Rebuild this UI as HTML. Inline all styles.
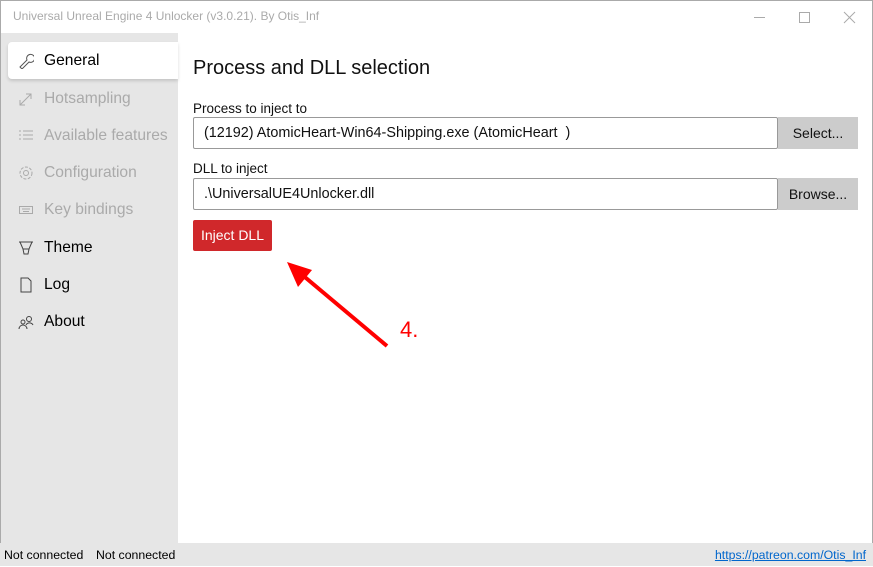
<!DOCTYPE html>
<html><head><meta charset="utf-8"><style>
*{box-sizing:border-box;margin:0;padding:0}
body{width:873px;height:566px;overflow:hidden;font-family:"Segoe UI","Liberation Sans",sans-serif;background:#fff;position:relative}
.frame{position:absolute;left:0;top:0;width:873px;height:566px;border:1px solid #aaa;border-bottom:none}
.title{position:absolute;left:13px;top:9px;font-size:12px;color:#aaa}
.side{position:absolute;left:1px;top:33px;width:177px;height:510px;background:#e6e6e6}
.nav{position:absolute;left:8px;height:37px;width:170px;font-size:15.6px;line-height:37px;padding-left:36px;color:#000}
.nav.dis{color:#aaa}
.nav.sel{background:#fff;border-radius:4px 0 0 4px;box-shadow:0 2px 3px rgba(0,0,0,.15)}
.nav svg{position:absolute;left:10px;top:11px}
h1{position:absolute;left:193px;top:57px;font-size:20px;font-weight:normal;color:#111}
.lbl{position:absolute;left:193px;font-size:13.5px;color:#111}
.inp{position:absolute;left:193px;width:585px;height:32px;border:1px solid #999;border-radius:2px;font-size:14.4px;line-height:30px;padding-left:10px;color:#111}
.btn{position:absolute;left:778px;width:80px;height:32px;background:#ccc;font-size:14px;line-height:32px;text-align:center;color:#111}
.inj{position:absolute;left:193px;top:220px;width:79px;height:31px;background:#d0282b;color:#fff;font-size:14px;line-height:31px;text-align:center;border-radius:2px}
.status{position:absolute;left:0;top:543px;width:873px;height:23px;background:#e6e6e6;font-size:12.3px;line-height:24px}
</style></head><body>
<div class="frame"></div>
<div class="title">Universal Unreal Engine 4 Unlocker (v3.0.21). By Otis_Inf</div>
<svg style="position:absolute;left:754px;top:10px" width="110" height="16"><line x1="0" y1="7.5" x2="11" y2="7.5" stroke="#aaa"/><rect x="45.5" y="2.5" width="10" height="10" fill="none" stroke="#aaa"/><path d="M90 2l11 11M101 2l-11 11" stroke="#aaa"/></svg>
<div class="side"></div>
<div class="nav sel" style="top:42px"><svg width="16" height="16"><path d="M2 14l7-7a4 4 0 1 1 2 2l-7 7z" fill="none" stroke="#555"/></svg>General</div>
<div class="nav dis" style="top:80px"><svg width="16" height="16"><path d="M2 14L13 3M2 9v5h5M13 8V3H8" fill="none" stroke="#aaa"/></svg>Hotsampling</div>
<div class="nav dis" style="top:117px"><svg width="16" height="16"><path d="M1 3h2M5 3h10M1 7h2M5 7h10M1 11h2M5 11h10" stroke="#aaa"/></svg>Available features</div>
<div class="nav dis" style="top:154px"><svg width="16" height="16"><circle cx="8" cy="8" r="6" fill="none" stroke="#aaa" stroke-dasharray="3 1.5"/><circle cx="8" cy="8" r="2.5" fill="none" stroke="#aaa"/></svg>Configuration</div>
<div class="nav dis" style="top:191px"><svg width="16" height="16"><rect x="1.5" y="4.5" width="13" height="7" fill="none" stroke="#aaa"/><path d="M4 7h8M5 9.5h6" stroke="#aaa"/></svg>Key bindings</div>
<div class="nav" style="top:229px"><svg width="16" height="16"><path d="M1 2h14M2 2l3 7h6l3-7M5 9l1 5h4l1-5" fill="none" stroke="#444"/></svg>Theme</div>
<div class="nav" style="top:266px"><svg width="16" height="16"><path d="M3 1h7l3 3v11H3z" fill="none" stroke="#444"/></svg>Log</div>
<div class="nav" style="top:303px"><svg width="16" height="16"><circle cx="5" cy="8" r="2" fill="none" stroke="#444"/><circle cx="11" cy="5" r="2.5" fill="none" stroke="#444"/><path d="M1 15a4 4 0 0 1 8 0M8 11a4 4 0 0 1 7 0" fill="none" stroke="#444"/></svg>About</div>
<h1>Process and DLL selection</h1>
<div class="lbl" style="top:101px">Process to inject to</div>
<div class="inp" style="top:117px">(12192) AtomicHeart-Win64-Shipping.exe (AtomicHeart &nbsp;)</div>
<div class="btn" style="top:117px">Select...</div>
<div class="lbl" style="top:161px">DLL to inject</div>
<div class="inp" style="top:178px">.\UniversalUE4Unlocker.dll</div>
<div class="btn" style="top:178px">Browse...</div>
<div class="inj">Inject DLL</div>
<svg style="position:absolute;left:0;top:0" width="873" height="566"><line x1="387" y1="346" x2="300" y2="273" stroke="#f00" stroke-width="4"/><polygon points="287,262 312,270 298,287" fill="#f00"/><text x="400" y="337" font-family="Liberation Sans,sans-serif" font-size="22" fill="#f00">4.</text></svg>
<div class="status"><span style="position:absolute;left:4px">Not connected</span><span style="position:absolute;left:96px">Not connected</span><span style="position:absolute;right:7px;color:#06c;text-decoration:underline">https://patreon.com/Otis_Inf</span></div>
</body></html>
